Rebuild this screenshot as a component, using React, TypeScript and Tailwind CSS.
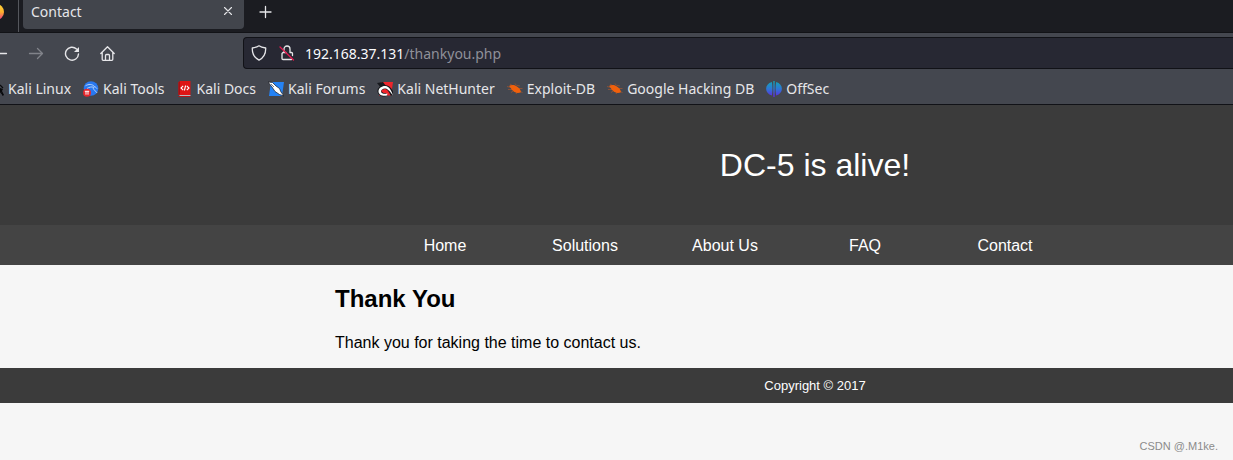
import React from "react";

function FirefoxIcon() {
  return (
    <svg className="-ml-3 h-4 w-4 shrink-0" viewBox="0 0 16 16" aria-hidden="true">
      <defs>
        <linearGradient id="fox" x1="0" y1="0" x2="0" y2="1">
          <stop offset="0" stopColor="#ffd83a" />
          <stop offset=".5" stopColor="#ffb02c" />
          <stop offset="1" stopColor="#f0348a" />
        </linearGradient>
      </defs>
      <circle cx="8" cy="8" r="8" fill="url(#fox)" />
    </svg>
  );
}

function DragonIcon() {
  return (
    <svg className="h-4 w-4 shrink-0" viewBox="0 0 16 16" aria-hidden="true">
      <path d="M4 3c4 0 7 1 8 4l3 1-1 2 2 4-1.500 1-1-4-3-1-1 5H8l1-6-5-3z" fill="#08090b" />
      <path d="M12 4l3 3M11 9l4 5" stroke="#08090b" strokeWidth="1.200" />
    </svg>
  );
}

function ToolsIcon() {
  return (
    <svg className="h-4 w-4 shrink-0" viewBox="0 0 16 16" aria-hidden="true">
      <circle cx="8" cy="7.500" r="7.300" fill="#2878f0" />
      <path d="M2.500 4.800C5.500 3 9 2.800 11.500 5.500M4 7.500c2.500-1.600 4.500-1.800 6.500-1.300 1.200-.8 2.500-.2 3.500 1.500M10.500 6.500c-1 2.500 2.500 3 3.500 5.500" fill="none" stroke="#c5dcfb" strokeWidth=".9" />
      <circle cx="4" cy="11.700" r="4" fill="#e5262b" />
      <path d="M1.800 10.300h4.400M3 10.300v3.400M5 10.300v3.400" stroke="#fff" strokeWidth="1" />
    </svg>
  );
}

function DocsIcon() {
  return (
    <svg className="h-4 w-4 shrink-0" viewBox="0 0 16 16" aria-hidden="true">
      <path d="M1.500 1.500L3 0h10.500v14h-12z" fill="#dd1515" />
      <path d="M1.500 1.500L3 0v13l-1.500 1z" fill="#a80f12" />
      <path d="M2.500 14h11v1h-11z" fill="#b9b9be" />
      <path d="M1.500 15h12v1h-12z" fill="#b81215" />
      <path d="M6.200 4.800L4 7l2.200 2.200M9.800 4.800L12 7 9.800 9.200M8.600 4.500L7.400 9.500" fill="none" stroke="#fff" strokeWidth="1.100" />
    </svg>
  );
}

function ForumsIcon() {
  return (
    <svg className="h-4 w-4 shrink-0" viewBox="0 0 16 16" aria-hidden="true">
      <path d="M3 1h13l-2 14H1z" fill="#2583f5" />
      <path d="M0 1l4.500.5L8 5l3.500 2.500L13 11l3 4-4.500-1.500L7 10.500 4 6z" fill="#fff" stroke="#15191f" strokeWidth=".7" />
      <path d="M3 3l3 3" stroke="#4a4d55" strokeWidth=".7" />
    </svg>
  );
}

function NetHunterIcon() {
  return (
    <svg className="h-4 w-4 shrink-0" viewBox="0 0 16 16" aria-hidden="true">
      <path d="M4 1h12l-2 13.500H2z" fill="#ef252b" />
      <path d="M0 2l6-1 3 4-5 2z" fill="#17191d" />
      <path d="M9.500 13C7 14 3 13.500 2.500 10.500 2 8 4.500 6.500 7.500 6c3.500-.4 6 3 8 8" fill="none" stroke="#17191d" strokeWidth="4" />
      <path d="M10.500 12.500l-.5 2C6 15.500 1.500 14 1.500 10.500 1.500 7 5 4.700 8.500 5c3.500.4 6 4.500 7.500 9.500-2.500-3-4.500-6.500-7.500-7-2.500-.3-4.500 1.200-4.500 3 0 2 3.500 2.800 6.500 2z" fill="#fff" />
      <path d="M7 9c1.800-.7 3.500.5 4 2.500-1.800.7-4.500.8-5 0C5.500 10.700 6 9.500 7 9z" fill="#ef252b" />
    </svg>
  );
}

function BugIcon() {
  return (
    <svg className="h-4 w-4 shrink-0" viewBox="0 0 16 16" aria-hidden="true">
      <path d="M0 5.500l4 1M1 8.500h4M3 3l3 2M8 2.500l1.500 2M10 4.500l3 .5M12 7.500h3.500M6 10l-2 1.500M10 11l-1 2M13 10.500l2.500 1" stroke="#a5562f" strokeWidth=".7" />
      <path d="M2 5C4.500 3.500 7.500 4 9.500 5.300c2.600 1.400 4.300 3.400 4.500 6-3 1.200-6.200.6-8-1.500C4 8.500 4 6.500 2 5z" fill="#f0600c" />
    </svg>
  );
}

function OffSecIcon() {
  return (
    <svg className="h-4 w-4 shrink-0" viewBox="0 0 16 16" aria-hidden="true">
      <defs>
        <linearGradient id="offsec" gradientUnits="userSpaceOnUse" x1="0" y1="0" x2="0" y2="16">
          <stop offset="0" stopColor="#12a5b5" />
          <stop offset=".5" stopColor="#2d76d5" />
          <stop offset="1" stopColor="#6327e0" />
        </linearGradient>
      </defs>
      <path
        d="M7.300 0h1.400v16H7.300zM5.900 1C6.600 5 6.600 10 5.900 14.500-1.800 12.500-1.800 3 5.900 1zM10.100 1c7.700 2 7.700 11.500 0 13.500C9.400 10 9.400 5 10.100 1z"
        fill="url(#offsec)"
      />
    </svg>
  );
}

const bookmarks = [
  { label: "Kali Linux", Icon: DragonIcon },
  { label: "Kali Tools", Icon: ToolsIcon },
  { label: "Kali Docs", Icon: DocsIcon },
  { label: "Kali Forums", Icon: ForumsIcon },
  { label: "Kali NetHunter", Icon: NetHunterIcon },
  { label: "Exploit-DB", Icon: BugIcon },
  { label: "Google Hacking DB", Icon: BugIcon },
  { label: "OffSec", Icon: OffSecIcon },
];

const links = ["Home", "Solutions", "About Us", "FAQ", "Contact"];

const stroke = {
  fill: "none",
  stroke: "currentColor",
  strokeWidth: 1.3,
  strokeLinecap: "round" as const,
  strokeLinejoin: "round" as const,
};

function TabStrip() {
  return (
    <div className="flex h-[33px] items-start border-b border-[#121317] bg-[#1b1c21]">
      <div className="flex h-8 w-[19px] items-start border-r border-[#55575d] pt-1">
        <FirefoxIcon />
      </div>
      <div className="ml-1 flex h-[29px] w-[221px] items-start justify-between rounded-b bg-[#42454c] px-2">
        <span className="pt-0.5 leading-5">Contact</span>
        <button aria-label="Close tab" className="mt-1 h-4 w-4">
          <svg viewBox="0 0 16 16" {...stroke} strokeWidth={1.1}>
            <path d="M4.500 3.500l7 7M11.500 3.500l-7 7" />
          </svg>
        </button>
      </div>
      <button aria-label="New tab" className="mt-1 ml-3.5 h-4 w-4">
        <svg viewBox="0 0 16 16" {...stroke}>
          <path d="M7.500 2.500v11M2 8h11" />
        </svg>
      </button>
    </div>
  );
}

function Toolbar() {
  return (
    <div className="flex h-10 items-center">
      <div className="flex w-[243px] shrink-0 items-center">
        <button aria-label="Back" className="-ml-2 h-4 w-4">
          <svg viewBox="0 0 16 16" {...stroke}>
            <path d="M14.500 8.500H2M7 3.500l-5 5 5 5" />
          </svg>
        </button>
        <button aria-label="Forward" disabled className="ml-5 h-4 w-4 text-[#81838a]">
          <svg viewBox="0 0 16 16" {...stroke}>
            <path d="M1.500 8.500h13M9.500 3.500l5 5-5 5" />
          </svg>
        </button>
        <button aria-label="Reload" className="ml-5 h-4 w-4">
          <svg viewBox="0 0 16 16" {...stroke} strokeWidth={1.4}>
            <path d="M14.500 9a6.500 6.500 0 1 1-2-5" />
            <path d="M15 2v5h-5z" fill="currentColor" stroke="none" />
          </svg>
        </button>
        <button aria-label="Home" className="ml-5 h-4 w-4">
          <svg viewBox="0 0 16 16" {...stroke}>
            <path d="M.8 8.500l6.700-6.800 6.700 6.800M2.200 7.300v7a1 1 0 0 0 1 1h8.600a1 1 0 0 0 1-1v-7M5.500 15v-4.500a1 1 0 0 1 1-1h2a1 1 0 0 1 1 1V15" />
          </svg>
        </button>
      </div>
      <div className="flex h-8 min-w-0 grow items-center rounded-l border border-r-0 border-[#111217] bg-[#272833] pl-[7px]">
        <svg className="h-4 w-4 shrink-0" viewBox="0 0 16 16" {...stroke}>
          <path d="M8 .8c2 1.400 4 1.800 6.700 2.200.2 5-1.500 9.500-6.700 12.200C2.800 12.500 1.100 8 1.300 3 4 2.600 6 2.200 8 .8z" />
        </svg>
        <svg className="ml-3 h-4 w-4 shrink-0" viewBox="0 0 16 16" {...stroke}>
          <path d="M5 7V4a3 3 0 0 1 6 0v3.500h1.500a1 1 0 0 1 1 1v2M3 8.500v5a1 1 0 0 0 1 1h8.500M3 8.500l1-1h3" />
          <path d="M1 2l13.500 13" stroke="#e01b50" />
        </svg>
        <div className="ml-2.5 pt-px text-[#8f9099]">
          <span className="text-[#fbfbfe]">192.168.37.131</span>/thankyou.php
        </div>
      </div>
    </div>
  );
}

export default function App() {
  return (
    <div className="min-h-screen overflow-hidden bg-[#f6f6f6] font-['Liberation_Sans',sans-serif] text-base text-black">
      <div className="bg-[#44474f] font-['Noto_Sans',sans-serif] text-sm whitespace-nowrap text-[#e6e6e9]">
        <TabStrip />
        <Toolbar />
        <nav aria-label="Bookmarks" className="flex h-8 items-center gap-3 border-b border-[#111217]">
          {bookmarks.map(({ label, Icon }) => (
            <a key={label} href="#" className="flex items-center gap-1 first:-ml-3">
              <Icon />
              {label}
            </a>
          ))}
        </nav>
      </div>

      <header className="bg-[#3b3b3b] pl-[335px] text-white">
        <h1 className="flex h-[120px] w-[960px] items-center justify-center text-[32px]">DC-5 is alive!</h1>
      </header>
      <nav aria-label="Site" className="flex h-10 items-center bg-[#444444] pt-0.5 pl-[375px] text-white">
        {links.map((label) => (
          <a key={label} href="#" className="w-[140px] shrink-0 text-center">
            {label}
          </a>
        ))}
      </nav>
      <main className="h-[103px] pt-4 pl-[335px]">
        <h2 className="text-2xl leading-9 font-bold">Thank You</h2>
        <p className="mt-3.5">Thank you for taking the time to contact us.</p>
      </main>
      <footer className="bg-[#3b3b3b] pl-[335px] text-white">
        <p className="w-[960px] py-2 text-center text-[13px] leading-[19px]">Copyright © 2017</p>
      </footer>
      <p className="mt-[35px] pr-[15px] text-right text-[11px] leading-4 text-[#8b8b8b]">CSDN @.M1ke.</p>
    </div>
  );
}
